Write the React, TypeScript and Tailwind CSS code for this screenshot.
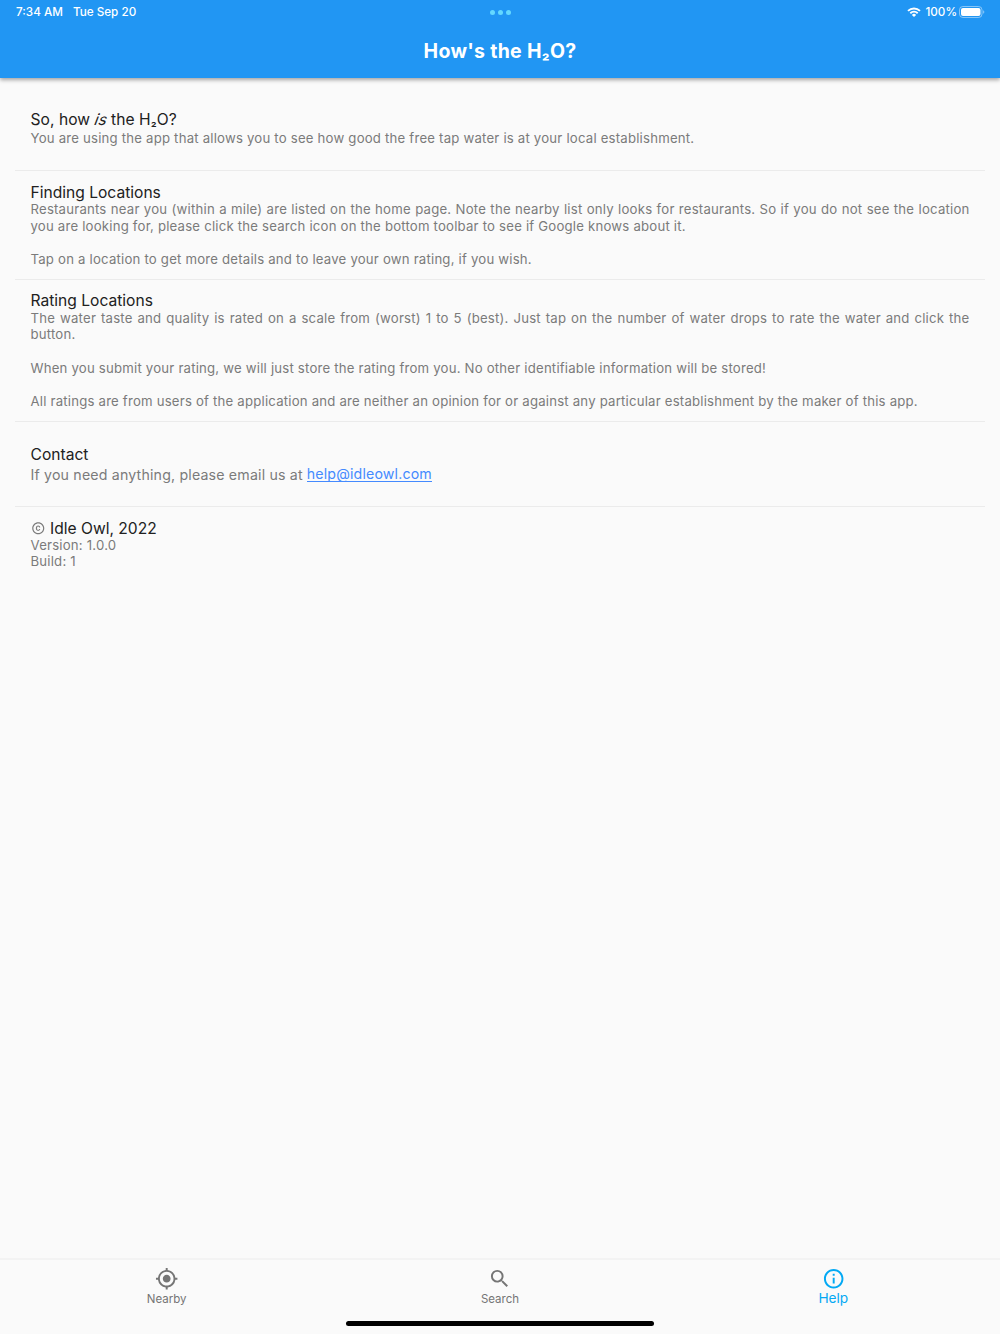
import type { ReactNode } from 'react'
import { MdCopyright, MdInfoOutline, MdMyLocation, MdSearch } from 'react-icons/md'

function StatusBar() {
  return (
    <div className="flex h-6 items-center justify-between pl-4 pr-[15px] text-[11.7px] font-medium">
      <div className="flex w-60 gap-2.5 pt-px">
        <span>7:34 AM</span>
        <span>Tue Sep 20</span>
      </div>
      <div className="mr-px flex gap-[3px]">
        <span className="size-[5px] rounded-full bg-[#64d8ff]" />
        <span className="size-[5px] rounded-full bg-[#64d8ff]" />
        <span className="size-[5px] rounded-full bg-[#64d8ff]" />
      </div>
      <div className="flex w-60 items-center justify-end">
        <svg viewBox="0 0 14 10" className="mr-1 h-[10px] w-[14px]" fill="none" stroke="white" strokeWidth="1.9">
          <path d="M1 3.9a8.6 8.6 0 0 1 12 0" />
          <path d="M3.3 6.3a5.3 5.3 0 0 1 7.4 0" />
          <path d="M7 9.9 4.9 7.9a3 3 0 0 1 4.2 0z" fill="white" stroke="none" />
        </svg>
        <span className="pt-px">100%</span>
        <svg viewBox="0 0 26 12" className="ml-[2px] h-[12px] w-[26px]">
          <rect x="0.5" y="0.5" width="22.5" height="11" rx="3.4" fill="none" stroke="white" strokeOpacity="0.45" />
          <rect x="2" y="2" width="19.5" height="8" rx="2" fill="white" />
          <path d="M24.2 4.2v3.6a2 2 0 0 0 0-3.6z" fill="white" fillOpacity="0.5" />
        </svg>
      </div>
    </div>
  )
}

function Section({ title, children, className = 'pt-3 pb-[11.4px]' }: { title: ReactNode; children: ReactNode; className?: string }) {
  return (
    <section className={`border-b border-[#ebebeb] px-[15.5px] last:border-b-0 ${className}`}>
      <h2 className="flex h-[18px] items-center whitespace-pre pt-px text-[15.6px] text-[#212121]">{title}</h2>
      {children}
    </section>
  )
}

const bodyText = 'text-justify text-[13.2px] leading-[16.6px] tracking-[0.2px] text-[#7b7b7b]'

export default function App() {
  return (
    <div className="flex h-[1334px] w-[1000px] flex-col bg-[#fafafa] font-['Inter',sans-serif]">
      <header className="z-10 h-[78px] bg-[#2196f3] text-white shadow-[0_2px_4px_rgba(0,0,0,0.35)]">
        <StatusBar />
        <h1 className="flex h-[54px] items-center justify-center pt-[2px] text-[19.5px] font-bold tracking-[0.3px]">
          <span>
            How's the H<span className="text-[17px]">₂</span>O?
          </span>
        </h1>
      </header>

      <main className="flex-1 px-[15px]">
        <Section
          title={
            <span className="tracking-[0.05px]">
              So, how <i className="inline-block -skew-x-12">is</i> the H<span className="text-[13.5px]">₂</span>O?
            </span>
          }
          className="pt-8 pb-[23.5px]"
        >
          <p className={`mt-[2px] ${bodyText}`}>
            You are using the app that allows you to see how good the free tap water is at your local establishment.
          </p>
        </Section>

        <Section title="Finding Locations">
          <div className={`space-y-[16.6px] ${bodyText}`}>
            <p>
              Restaurants near you (within a mile) are listed on the home page. Note the nearby list only looks for
              restaurants. So if you do not see the location you are looking for, please click the search icon on the
              bottom toolbar to see if Google knows about it.
            </p>
            <p>Tap on a location to get more details and to leave your own rating, if you wish.</p>
          </div>
        </Section>

        <Section title="Rating Locations" className="pt-[11.4px] pb-[11.5px]">
          <div className={`mt-[0.5px] space-y-[16.6px] ${bodyText}`}>
            <p>
              The water taste and quality is rated on a scale from (worst) 1 to 5 (best). Just tap on the number of
              water drops to rate the water and click the button.
            </p>
            <p>When you submit your rating, we will just store the rating from you. No other identifiable information will be stored!</p>
            <p>
              All ratings are from users of the application and are neither an opinion for or against any particular
              establishment by the maker of this app.
            </p>
          </div>
        </Section>

        <Section title="Contact" className="pt-[23.5px] pb-[21.5px]">
          <div className="mt-[2px] flex h-[19px] items-center gap-1 text-[14.2px] leading-[17px] text-[#7b7b7b]">
            <span className="tracking-[0.17px]">If you need anything, please email us at</span>
            <a href="mailto:help@idleowl.com" className="mb-px border-b border-[#448aff] leading-[15px] tracking-[0.15px] text-[#448aff]">
              help@idleowl.com
            </a>
          </div>
        </Section>

        <Section title={<><MdCopyright className="mr-[5px] size-[14.5px] text-[#7b7b7b]" />Idle Owl, 2022</>}>
          <div className={bodyText}>
            <p>Version: 1.0.0</p>
            <p>Build: 1</p>
          </div>
        </Section>
      </main>

      <nav className="grid h-[76px] grid-cols-3 border-t-2 border-[#f3f3f3] text-[11.5px] text-[#757575]">
        <div className="flex flex-col items-center pt-[6.5px]">
          <MdMyLocation className="size-[23.4px]" />
          <span className="mt-[1.5px]">Nearby</span>
        </div>
        <div className="flex flex-col items-center pt-[6.5px]">
          <MdSearch className="size-[23.4px]" />
          <span className="mt-[1.5px]">Search</span>
        </div>
        <div className="flex flex-col items-center pt-[6.5px] text-[#03a9f4]">
          <MdInfoOutline className="size-[23.4px]" />
          <span className="text-[13.7px] leading-[17px]">Help</span>
        </div>
        <div className="col-span-3 mb-[8px] h-[5px] w-[308px] self-end justify-self-center rounded-full bg-black" />
      </nav>
    </div>
  )
}
